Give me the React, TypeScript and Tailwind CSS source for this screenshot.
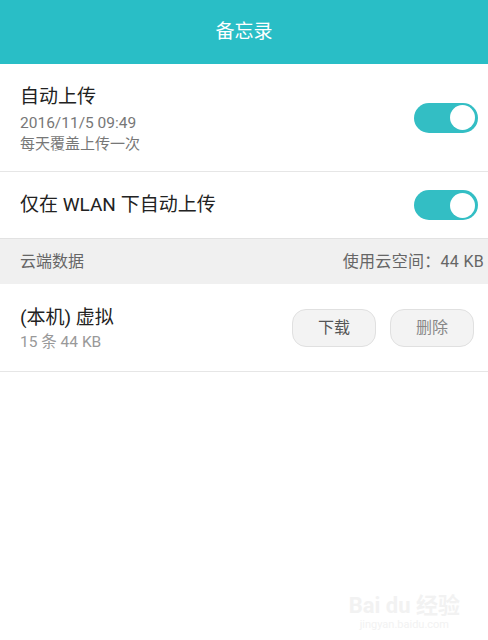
import React from "react";

const font = { fontFamily: '"Roboto", "Noto Sans CJK SC", sans-serif' };

function Toggle() {
  return (
    <div className="flex h-[30px] w-[64px] items-center justify-end rounded-full bg-[#33bec4] pr-[3px]">
      <div className="h-[25px] w-[25px] rounded-full bg-white" />
    </div>
  );
}

export default function App() {
  return (
    <div className="relative h-[640px] w-[488px] overflow-hidden bg-white" style={font}>
      <div className="flex h-[64px] items-center justify-center bg-[#29bec6]">
        <span className="text-[19px] text-white">备忘录</span>
      </div>

      <div className="flex h-[108px] items-center justify-between border-b border-[#e6e6e6] pl-[20px] pr-[10px]">
        <div className="flex flex-col pt-[4px]">
          <span className="text-[19px] leading-[25px] text-[#222]">自动上传</span>
          <span className="mt-[4px] text-[15.5px] leading-[21px] text-[#777]">2016/11/5 09:49</span>
          <span className="text-[15px] leading-[21px] text-[#777]">每天覆盖上传一次</span>
        </div>
        <Toggle />
      </div>

      <div className="flex h-[66px] items-center justify-between pl-[20px] pr-[10px]">
        <span className="text-[19px] text-[#222]">仅在 WLAN 下自动上传</span>
        <Toggle />
      </div>

      <div className="flex h-[46px] items-center justify-between border-t border-[#e2e2e2] bg-[#f0f0f0] pl-[20px] pr-[4px]">
        <span className="text-[16px] text-[#666]">云端数据</span>
        <span className="text-[16px] tracking-[0.3px] text-[#666]">使用云空间：44 KB</span>
      </div>

      <div className="flex h-[88px] items-center justify-between border-b border-[#e6e6e6] pl-[20px] pr-[14px]">
        <div className="flex flex-col pt-[2px]">
          <span className="text-[19px] leading-[26px] text-[#222]">(本机) 虚拟</span>
          <span className="mt-[1px] text-[15.5px] leading-[21px] text-[#999]">15 条 44 KB</span>
        </div>
        <div className="flex gap-[14px]">
          <div className="flex h-[38px] w-[84px] items-center justify-center rounded-[14px] border border-[#e0e0e0] bg-[#f3f3f3] text-[16px] text-[#555]">
            下载
          </div>
          <div className="flex h-[38px] w-[84px] items-center justify-center rounded-[14px] border border-[#e0e0e0] bg-[#f3f3f3] text-[16px] text-[#888]">
            删除
          </div>
        </div>
      </div>

      <div className="absolute bottom-[8px] right-[28px] flex flex-col items-center text-[#f2f2f2]">
        <span className="text-[22px] font-bold leading-[24px]">Bai du 经验</span>
        <span className="text-[11px] leading-[14px]">jingyan.baidu.com</span>
      </div>
    </div>
  );
}
